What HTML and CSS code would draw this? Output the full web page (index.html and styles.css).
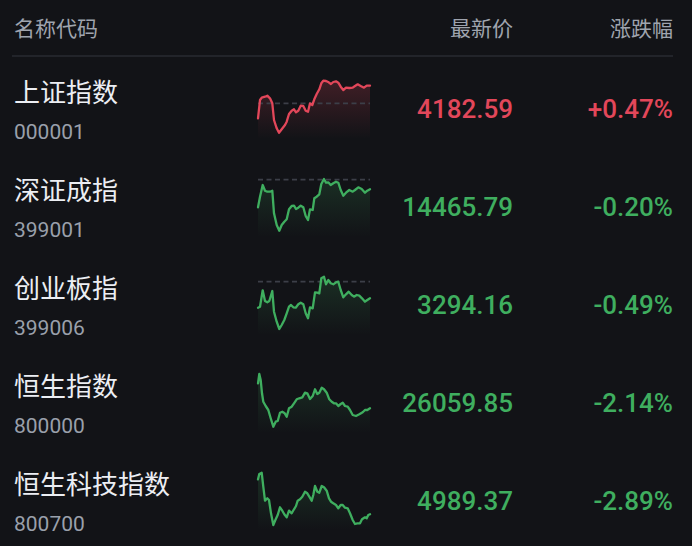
FILE: index.html
```html
<!DOCTYPE html>
<html lang="zh-CN">
<head>
<meta charset="utf-8">
<title>指数行情</title>
<link rel="stylesheet" href="styles.css">
</head>
<body>
<div class="board">
  <div class="head">
    <span class="h-name">名称代码</span>
    <span class="h-price">最新价</span>
    <span class="h-pct">涨跌幅</span>
  </div>

  <div class="row up">
    <div class="info"><div class="name">上证指数</div><div class="code">000001</div></div>
    <svg class="spark" viewBox="0 0 112 64" width="112" height="64">
      <defs><linearGradient id="g1" x1="0" y1="0" x2="0" y2="1"><stop offset="0" stop-color="#e2475a" stop-opacity="0.22"/><stop offset="1" stop-color="#e2475a" stop-opacity="0"/></linearGradient></defs>
      <path fill="url(#g1)" d="M0,40.3 L2,22 3.7,19.7 7,18.7 9.3,17.7 12,20.3 14.3,25.3 16,42 18.7,50.3 21,54.7 23.7,51.3 27,47 28.7,43.7 31,36 33.7,32.7 36,31.3 38,34.3 40.3,32.7 42.7,27.7 45.3,28 47.7,32.7 50,33.7 52,25.3 54.3,27 56.3,21.3 58.7,16 61.3,11.3 63.3,5.3 65.3,2.7 68,3 70.7,4.3 73,6 75.3,4 78,3.3 80.3,4.7 82.7,8.7 85.3,12 88,9.7 91.3,10 94.7,9.7 97,8 99.7,6.3 102.7,8 106,9.7 108.7,7.7 112,7.7 L112,61 L0,61 Z"/>
      <line class="ref" x1="0" y1="25.3" x2="112" y2="25.3"/>
      <path class="line" d="M0,40.3 L2,22 3.7,19.7 7,18.7 9.3,17.7 12,20.3 14.3,25.3 16,42 18.7,50.3 21,54.7 23.7,51.3 27,47 28.7,43.7 31,36 33.7,32.7 36,31.3 38,34.3 40.3,32.7 42.7,27.7 45.3,28 47.7,32.7 50,33.7 52,25.3 54.3,27 56.3,21.3 58.7,16 61.3,11.3 63.3,5.3 65.3,2.7 68,3 70.7,4.3 73,6 75.3,4 78,3.3 80.3,4.7 82.7,8.7 85.3,12 88,9.7 91.3,10 94.7,9.7 97,8 99.7,6.3 102.7,8 106,9.7 108.7,7.7 112,7.7"/>
    </svg>
    <div class="price">4182.59</div>
    <div class="pct">+0.47%</div>
  </div>

  <div class="row down">
    <div class="info"><div class="name">深证成指</div><div class="code">399001</div></div>
    <svg class="spark" viewBox="0 0 112 64" width="112" height="64">
      <defs><linearGradient id="g2" x1="0" y1="0" x2="0" y2="1"><stop offset="0" stop-color="#3fae5f" stop-opacity="0.18"/><stop offset="1" stop-color="#3fae5f" stop-opacity="0"/></linearGradient></defs>
      <path fill="url(#g2)" d="M0,31.3 L2,20.7 4.7,9 7,14.7 9.3,15.7 12,15.7 14.3,14.7 16,37.3 18.7,49 21.3,54.7 23.7,49 26.3,45.7 28.7,43.3 31,33.3 33.7,30 36,29.7 38,33 40.3,31.7 42.7,29.7 45.3,31.3 47.7,40 50,44 52,33.3 54.7,34 56.3,22.3 58.7,20.7 61.3,18.3 63.3,8 66,3 68,6.7 70.3,6.3 72.7,9 75.3,7.3 78,5.7 80.3,6.7 82.7,14 85.3,19.7 88,16.7 91.3,14 94.7,15.7 97,14 100.3,11.3 103.7,13 107,16.7 109.3,14.7 112,13.3 L112,61 L0,61 Z"/>
      <line class="ref" x1="0" y1="3.7" x2="112" y2="3.7"/>
      <path class="line" d="M0,31.3 L2,20.7 4.7,9 7,14.7 9.3,15.7 12,15.7 14.3,14.7 16,37.3 18.7,49 21.3,54.7 23.7,49 26.3,45.7 28.7,43.3 31,33.3 33.7,30 36,29.7 38,33 40.3,31.7 42.7,29.7 45.3,31.3 47.7,40 50,44 52,33.3 54.7,34 56.3,22.3 58.7,20.7 61.3,18.3 63.3,8 66,3 68,6.7 70.3,6.3 72.7,9 75.3,7.3 78,5.7 80.3,6.7 82.7,14 85.3,19.7 88,16.7 91.3,14 94.7,15.7 97,14 100.3,11.3 103.7,13 107,16.7 109.3,14.7 112,13.3"/>
    </svg>
    <div class="price">14465.79</div>
    <div class="pct">-0.20%</div>
  </div>

  <div class="row down">
    <div class="info"><div class="name">创业板指</div><div class="code">399006</div></div>
    <svg class="spark" viewBox="0 0 112 64" width="112" height="64">
      <defs><linearGradient id="g3" x1="0" y1="0" x2="0" y2="1"><stop offset="0" stop-color="#3fae5f" stop-opacity="0.18"/><stop offset="1" stop-color="#3fae5f" stop-opacity="0"/></linearGradient></defs>
      <path fill="url(#g3)" d="M0,33.7 L2,32.7 4.7,16.3 7,27 9.3,28.3 11.3,27 14.3,17 16,37.7 18.7,47.7 21.3,55 23.7,51 26.3,46 28.7,39.3 31,32.7 33,31 35.3,33.3 37.7,33.7 40.3,30.3 42.7,28.7 45.3,30.3 47.7,39.3 50,44.3 52,33.3 54.7,34.3 57,18.3 59.3,18.7 61.3,19.3 63.3,4.3 66,2.7 68,10.3 70.3,6 72.7,9.3 75.3,10.3 78,8.3 80.3,7.7 82.7,16 85.3,23.3 88,20.3 90.7,17.7 93.7,21 96,22.7 98.7,21 101.3,21.7 104,24.3 107,27.7 109.3,26 112,24.3 L112,61 L0,61 Z"/>
      <line class="ref" x1="0" y1="7.7" x2="112" y2="7.7"/>
      <path class="line" d="M0,33.7 L2,32.7 4.7,16.3 7,27 9.3,28.3 11.3,27 14.3,17 16,37.7 18.7,47.7 21.3,55 23.7,51 26.3,46 28.7,39.3 31,32.7 33,31 35.3,33.3 37.7,33.7 40.3,30.3 42.7,28.7 45.3,30.3 47.7,39.3 50,44.3 52,33.3 54.7,34.3 57,18.3 59.3,18.7 61.3,19.3 63.3,4.3 66,2.7 68,10.3 70.3,6 72.7,9.3 75.3,10.3 78,8.3 80.3,7.7 82.7,16 85.3,23.3 88,20.3 90.7,17.7 93.7,21 96,22.7 98.7,21 101.3,21.7 104,24.3 107,27.7 109.3,26 112,24.3"/>
    </svg>
    <div class="price">3294.16</div>
    <div class="pct">-0.49%</div>
  </div>

  <div class="row down">
    <div class="info"><div class="name">恒生指数</div><div class="code">800000</div></div>
    <svg class="spark" viewBox="0 0 112 64" width="112" height="64">
      <defs><linearGradient id="g4" x1="0" y1="0" x2="0" y2="1"><stop offset="0" stop-color="#3fae5f" stop-opacity="0.18"/><stop offset="1" stop-color="#3fae5f" stop-opacity="0"/></linearGradient></defs>
      <path fill="url(#g4)" d="M0,11.3 L1.3,2 2.7,8 4,21.3 5.3,29.7 7.7,34 10.3,38 12.7,46.3 15.3,54.7 17.7,49.7 19.7,49 22,40.7 24.3,39.7 26.7,41.3 28.7,44.7 31,36.3 33.7,34.7 36,31.3 38.7,27.3 41.3,26.3 44.3,25.3 47,20.7 49.3,21.3 52,27 54.7,24 57,17.3 59.3,22 61.3,20.7 63.7,15.7 66,17.3 68.7,20.7 71.3,27.3 73.7,29.7 76,31.3 78,31.3 80.3,34 82.7,32 84.7,30.7 87,34 89.7,34.7 92,38 94.7,43 98,44 101.3,42.3 104.7,40.3 107,38 109.3,38 112,36.3 L112,61 L0,61 Z"/>
      <path class="line" d="M0,11.3 L1.3,2 2.7,8 4,21.3 5.3,29.7 7.7,34 10.3,38 12.7,46.3 15.3,54.7 17.7,49.7 19.7,49 22,40.7 24.3,39.7 26.7,41.3 28.7,44.7 31,36.3 33.7,34.7 36,31.3 38.7,27.3 41.3,26.3 44.3,25.3 47,20.7 49.3,21.3 52,27 54.7,24 57,17.3 59.3,22 61.3,20.7 63.7,15.7 66,17.3 68.7,20.7 71.3,27.3 73.7,29.7 76,31.3 78,31.3 80.3,34 82.7,32 84.7,30.7 87,34 89.7,34.7 92,38 94.7,43 98,44 101.3,42.3 104.7,40.3 107,38 109.3,38 112,36.3"/>
    </svg>
    <div class="price">26059.85</div>
    <div class="pct">-2.14%</div>
  </div>

  <div class="row down">
    <div class="info"><div class="name">恒生科技指数</div><div class="code">800700</div></div>
    <svg class="spark" viewBox="0 0 112 64" width="112" height="64">
      <defs><linearGradient id="g5" x1="0" y1="0" x2="0" y2="1"><stop offset="0" stop-color="#3fae5f" stop-opacity="0.18"/><stop offset="1" stop-color="#3fae5f" stop-opacity="0"/></linearGradient></defs>
      <path fill="url(#g5)" d="M0,9.3 L1.3,4 3.7,2.7 5.3,16.7 7,30.7 9.3,28.3 11,30 13,43.3 15.3,55 17.7,49.3 19.7,45 22,37.3 24.3,40.7 26.3,44.3 28.7,47.3 31,40.7 33.7,43.3 36,39.3 38,36 39.7,30.7 42,29.3 44.3,26.7 47,21.7 49.3,23.3 51.3,26.7 53.7,30.7 55.3,25 57,16 59.3,21.7 61.3,22.7 63.7,16 66,17.3 68.7,20.7 71,28.3 73,31.7 75.3,33.3 78,35 80.3,38.3 82.7,35 84.7,35 87,37.7 89.7,38.3 92,43.3 94.7,50 97,54 99.3,53.3 102,53.3 104,49.3 107,47.3 108.7,48.3 110.3,45 112,44.3 L112,60 L0,60 Z"/>
      <path class="line" d="M0,9.3 L1.3,4 3.7,2.7 5.3,16.7 7,30.7 9.3,28.3 11,30 13,43.3 15.3,55 17.7,49.3 19.7,45 22,37.3 24.3,40.7 26.3,44.3 28.7,47.3 31,40.7 33.7,43.3 36,39.3 38,36 39.7,30.7 42,29.3 44.3,26.7 47,21.7 49.3,23.3 51.3,26.7 53.7,30.7 55.3,25 57,16 59.3,21.7 61.3,22.7 63.7,16 66,17.3 68.7,20.7 71,28.3 73,31.7 75.3,33.3 78,35 80.3,38.3 82.7,35 84.7,35 87,37.7 89.7,38.3 92,43.3 94.7,50 97,54 99.3,53.3 102,53.3 104,49.3 107,47.3 108.7,48.3 110.3,45 112,44.3"/>
    </svg>
    <div class="price">4989.37</div>
    <div class="pct">-2.89%</div>
  </div>
</div>
</body>
</html>
```

FILE: styles.css
```css
* { box-sizing: border-box; }
html, body {
  margin: 0;
  padding: 0;
  background: #121317;
}
body {
  width: 692px;
  height: 546px;
  overflow: hidden;
  font-family: Roboto, "Noto Sans CJK SC", sans-serif;
}
.board {
  display: flex;
  flex-direction: column;
}
.head {
  display: grid;
  grid-template-columns: 1fr auto 160px;
  align-items: center;
  height: 57px;
  margin: 0 19px 0 12px;
  padding: 4px 0 0 2px;
  border-bottom: 2px solid #22242a;
  font-size: 21px;
  color: #9fa4ae;
}
.h-name, .h-price, .h-pct { line-height: 51px; }
.h-price, .h-pct { text-align: right; }

.row {
  display: grid;
  grid-template-columns: 244px 112px 143px 160px;
  height: 98px;
  padding: 0 19px 0 14px;
  align-items: center;
}
.info {
  align-self: start;
  padding-top: 18px;
  display: flex;
  flex-direction: column;
}
.name {
  font-size: 26px;
  line-height: 36px;
  color: #eceef3;
}
.code {
  font-size: 21px;
  line-height: 28px;
  margin-top: 7px;
  color: #9aa0ab;
}
.spark {
  align-self: start;
  margin-top: 21px;
  display: block;
  overflow: visible;
}
.spark .line {
  fill: none;
  stroke-width: 2.3;
  stroke-linejoin: round;
  stroke-linecap: round;
}
.spark .ref {
  stroke: #3c3f48;
  stroke-width: 1.8;
  stroke-dasharray: 5 3.5;
}
.up .line { stroke: #e2475a; }
.down .line { stroke: #3fae5f; }
.price, .pct {
  text-align: right;
  font-size: 26px;
  font-weight: 500;
  line-height: 30px;
  padding-top: 6px;
}
.up .price, .up .pct { color: #e2475a; }
.down .price, .down .pct { color: #3fae5f; }
```
